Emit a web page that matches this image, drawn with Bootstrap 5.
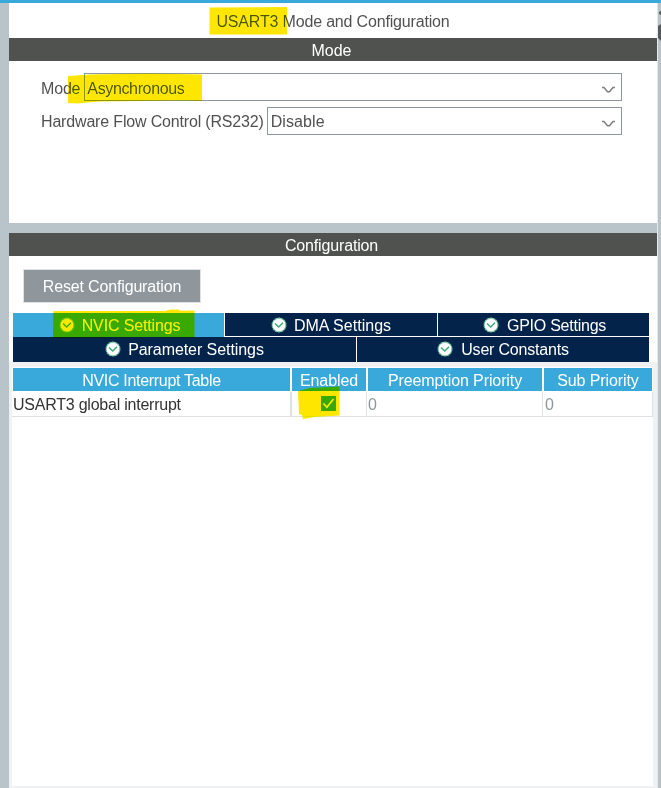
<!DOCTYPE html>
<html lang="en">
<head>
<meta charset="utf-8">
<title>USART3 Mode and Configuration</title>
<link href="https://cdn.jsdelivr.net/npm/bootstrap@5.3.0/dist/css/bootstrap.min.css" rel="stylesheet">
<style>
body{font-family:"Liberation Sans",Arial,sans-serif;font-size:16px;line-height:20px;color:#505250;background:#b8c4ca;height:788px;overflow:hidden}
.app{height:788px;border-top:3px solid #39a9dc;padding-left:9px;isolation:isolate}
.panes{width:649px;gap:10px;border-right:1px solid #e4e9ec}
.mode-pane{height:220px}
.title{height:35px;padding-top:2px;letter-spacing:-.17px}
.bar{height:23px;background:#505250;color:#fff;padding:2px 3px 0 0;letter-spacing:-.16px;line-height:21px}
.bar.mode-bar{letter-spacing:0}
.field{height:28px;margin-left:32px;margin-right:35px}
.first-field{margin-top:12px}
.second-field{margin-top:6px}
.field label{padding-top:1px;padding-right:3px;letter-spacing:-.17px}
.first-field label{padding-top:3px;padding-right:4px}
.select-box{border:1px solid #8f979d;height:28px;padding:2px 6px 0 3px}
.async{letter-spacing:-.36px;padding-top:2px}
.first-field .select-box{padding-left:2px}
.disable{letter-spacing:.08px}
.reset{width:178px;height:34px;margin:13px 0 0 14px;border:1px solid #dfe2e4;border-radius:0;background:#8f979d;color:#fff;padding:1px 0 0;line-height:32px;letter-spacing:-.16px}
.tabs{margin:10px 8px 0 4px;height:49px}
.tab-row{gap:1px}
.tab-row.top{height:23px}
.tab-item{background:#03234b;color:#fff;height:23px;gap:7px;padding-top:1px;letter-spacing:.02px}
.tab-item span{padding-top:1px}
.tab-item.tight{letter-spacing:-.24px;padding-left:2px}
.tab-item.tight svg{margin-right:1px}
.tab-row.second .tab-item{height:25px;padding-bottom:1px;padding-top:0;letter-spacing:-.07px}
.tab-row.second .tab-item.tight{letter-spacing:-.2px;padding-left:0}
.tab-item.on{background:#39a9dc;height:25px;margin-bottom:-1px;padding-bottom:2px;padding-left:2px;letter-spacing:-.15px}
.tab-row.second{margin-top:1px}
.w211{width:211px}.w212{width:212px}.w343{width:343px}.w292{width:292px}
.table-zone{background:#f0f1f3;padding:5px 4px 2px 3px}
.grid{display:grid;grid-template-columns:279px 76px 176px 110px}
.head{height:25px;background:#39a9dc;color:#fff;border:1px solid #fff;padding-top:3px;letter-spacing:-.1px;line-height:20px}
.head.wide{letter-spacing:-.3px}
.cell{height:25px;border-right:1px solid #dfe2e5;border-bottom:1px solid #dfe2e5;padding:3px 0 0 1px;color:#8f979d}
.cell.last{padding-left:2px}
.cell.name{color:#333;letter-spacing:-.23px}
.cell.chk{border-left:1px solid #dfe2e5;padding:4px 0 0 29px}
.marks{mix-blend-mode:darken;pointer-events:none;top:-3px}
</style>
<script src="https://cdn.jsdelivr.net/npm/bootstrap@5.3.0/dist/js/bootstrap.bundle.min.js"></script>
</head>
<body>
<svg class="d-none"><defs>
<symbol id="ok" viewBox="0 0 16 16"><circle cx="8" cy="8" r="6.900" fill="#fff" stroke="#6cc79a" stroke-width="1.200" stroke-dasharray="2.500 .6"/><path d="M4 6.500L7.700 10 12 5.800" fill="none" stroke="#3fa876" stroke-width="1.500"/></symbol>
<symbol id="chev" viewBox="0 0 13 8"><path d="M0 1.500H2L5.500 5.800H7.500L11 1.500h2" fill="none" stroke="#808080" stroke-width="1.500"/></symbol>
</defs></svg>
<div class="app position-relative">
  <main class="panes d-flex flex-column h-100">
    <section class="mode-pane bg-white flex-shrink-0">
      <div class="title d-flex justify-content-center align-items-center">USART3 Mode and Configuration</div>
      <div class="bar mode-bar d-flex justify-content-center align-items-center">Mode</div>
      <div class="field first-field d-flex align-items-center"><label>Mode</label>
        <div class="select-box flex-fill d-flex justify-content-between align-items-center"><span class="async">Asynchronous</span><svg class="mt-1" width="13" height="8"><use href="#chev"/></svg></div></div>
      <div class="field second-field d-flex align-items-center"><label>Hardware Flow Control (RS232)</label>
        <div class="select-box flex-fill d-flex justify-content-between align-items-center"><span class="disable">Disable</span><svg class="mt-1" width="13" height="8"><use href="#chev"/></svg></div></div>
    </section>
    <section class="bg-white flex-fill d-flex flex-column">
      <div class="bar d-flex justify-content-center align-items-center">Configuration</div>
      <button class="btn reset">Reset Configuration</button>
      <div class="tabs">
        <div class="tab-row top d-flex align-items-start">
          <div class="tab-item on w211 d-flex justify-content-center align-items-center"><svg width="16" height="16"><use href="#ok"/></svg><span>NVIC Settings</span></div>
          <div class="tab-item w212 d-flex justify-content-center align-items-center"><svg width="16" height="16"><use href="#ok"/></svg><span>DMA Settings</span></div>
          <div class="tab-item tight w211 d-flex justify-content-center align-items-center"><svg width="16" height="16"><use href="#ok"/></svg><span>GPIO Settings</span></div>
        </div>
        <div class="tab-row second d-flex">
          <div class="tab-item w343 d-flex justify-content-center align-items-center"><svg width="16" height="16"><use href="#ok"/></svg><span>Parameter Settings</span></div>
          <div class="tab-item tight w292 d-flex justify-content-center align-items-center"><svg width="16" height="16"><use href="#ok"/></svg><span>User Constants</span></div>
        </div>
      </div>
      <div class="table-zone flex-fill"><div class="bg-white h-100">
        <div class="grid text-nowrap">
          <div class="head wide text-center">NVIC Interrupt Table</div><div class="head text-center">Enabled</div><div class="head text-center">Preemption Priority</div><div class="head text-center">Sub Priority</div>
          <div class="cell name">USART3 global interrupt</div>
          <div class="cell chk"><svg class="d-block" width="15" height="15"><path d="M0 0h15v15H0z" fill="#39a9dc"/><path d="M2.500 7.500l3.400 3.800L12.500 3" fill="none" stroke="#fff" stroke-width="1.700"/></svg></div>
          <div class="cell">0</div><div class="cell last">0</div>
        </div>
      </div></div>
    </section>
  </main>
  <svg class="marks position-absolute start-0" width="661" height="788">
    <g fill="#ffe600"><path d="M209.500 7.500L287 7v27.500L209.500 34.500z"/>
    <path d="M68 76L90 74.500 150 73.500 202 74.500V101L180 100.500 100 101.500 77 103.500 68 103z"/>
    <path d="M53.300 311L165 311 170 309.500 178 309.500 181 310.700 194.500 310.500V337.500L150 337 53 337.700z"/>
    <path d="M298 391L310 388 339.500 386.500V415.500L315 417 303 419 302 415 299 414z"/></g>
    <path d="M661 11l-2 1v2l2 1zM661 24l-3 2v12l3 3z" fill="#555a5c"/>
  </svg>
</div>
</body>
</html>
